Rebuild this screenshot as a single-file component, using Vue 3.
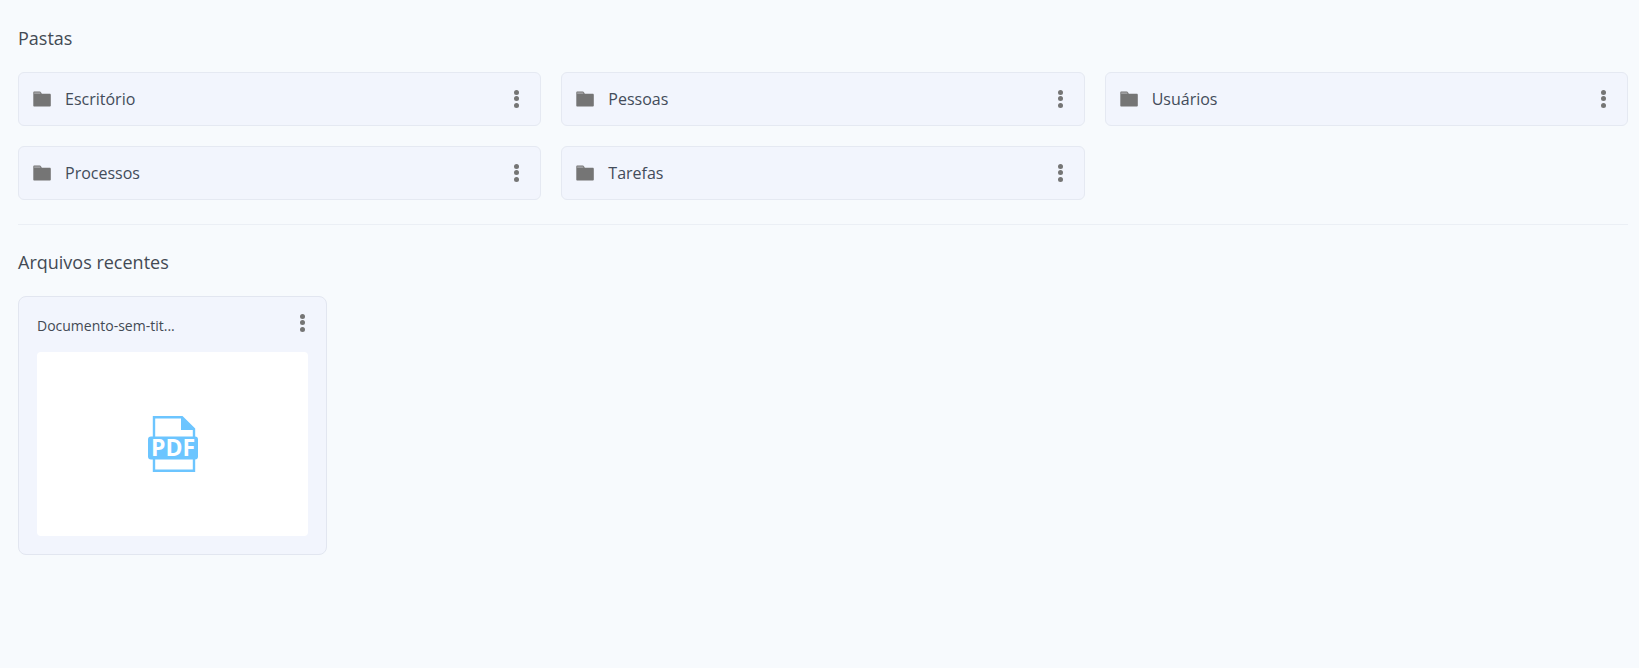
<script setup>
const folders = ['Escritório', 'Pessoas', 'Usuários', 'Processos', 'Tarefas']
</script>

<template>
  <main class="page">
    <h2 class="title">Pastas</h2>
    <div class="folders">
      <div v-for="f in folders" :key="f" class="folder">
        <svg class="folder-icon" width="18" height="16" viewBox="0 0 18 16">
          <path d="M1.4 0.5H6.6C7.3 0.5 7.8 0.9 8.1 1.5L8.8 2.8H16.7C17.4 2.8 17.8 3.3 17.8 4V14.5C17.8 15.2 17.3 15.6 16.7 15.6H1.4C0.7 15.6 0.3 15.1 0.3 14.5V1.6C0.3 1 0.7 0.5 1.4 0.5Z" fill="#757575"/>
          <path d="M1.2 2.1H7.4" stroke="#e9ebf0" stroke-width="0.6" fill="none"/>
        </svg>
        <span class="folder-name">{{ f }}</span>
        <div class="dots"><i></i><i></i><i></i></div>
      </div>
    </div>
    <hr class="divider" />
    <h2 class="title recent">Arquivos recentes</h2>
    <div class="file">
      <div class="file-head">
        <span class="file-name">Documento-sem-tit...</span>
        <div class="dots"><i></i><i></i><i></i></div>
      </div>
      <div class="preview">
        <svg width="50" height="56" viewBox="0 0 50 56">
          <path d="M6 21V1.2H34L46 13V21M46 43V54.8H6V43" fill="none" stroke="#6cc5ff" stroke-width="2.4"/>
          <path d="M33 1.2L46 14H33Z" fill="#6cc5ff"/>
          <rect x="0" y="20.5" width="50" height="23" rx="3" fill="#6cc5ff"/>
          <text x="25" y="40" text-anchor="middle" class="pdf">PDF</text>
        </svg>
      </div>
    </div>
  </main>
</template>

<style scoped>
.page {
  box-sizing: border-box;
  min-height: 668px;
  padding: 25px 11px 0 18px;
  background: #f7fafd;
  font-family: "Open Sans", sans-serif;
}
.title {
  margin: 0;
  font-size: 18px;
  font-weight: 400;
  line-height: 26px;
  color: #434a54;
}
.folders {
  display: grid;
  grid-template-columns: repeat(3, 1fr);
  gap: 20px;
  margin-top: 21px;
}
.folder {
  box-sizing: border-box;
  height: 54px;
  display: flex;
  align-items: center;
  padding: 0 21px 0 14px;
  background: #f2f5fd;
  border: 1px solid #e5e9f2;
  border-radius: 6px;
}
.folder-icon {
  flex: none;
}
.folder-name {
  margin-left: 14px;
  font-size: 16px;
  color: #434c5a;
}
.dots {
  margin-left: auto;
  display: flex;
  flex-direction: column;
  gap: 1.5px;
}
.folder .dots {
  margin-top: -1px;
}
.dots i {
  display: block;
  width: 5px;
  height: 5px;
  border-radius: 50%;
  background: #757575;
}
.divider {
  margin: 24px 0 0;
  border: 0;
  border-top: 1px solid #ebeff5;
}
.recent {
  margin-top: 24px;
}
.file {
  box-sizing: border-box;
  width: 309px;
  height: 259px;
  margin-top: 21px;
  padding: 14px 18px 18px;
  background: #f2f5fd;
  border: 1px solid #e2e6f0;
  border-radius: 8px;
  display: flex;
  flex-direction: column;
}
.file-head {
  display: flex;
  align-items: flex-start;
  height: 41px;
  padding-right: 3px;
}
.file-name {
  margin-top: 5px;
  font-size: 14px;
  line-height: 19px;
  color: #434a54;
}
.file-head .dots {
  margin-top: 2.5px;
}
.preview {
  flex: 1;
  box-sizing: border-box;
  padding-bottom: 1px;
  background: #fff;
  border-radius: 4px;
  display: flex;
  align-items: center;
  justify-content: center;
}
.pdf {
  font-family: "Open Sans", sans-serif;
  font-weight: 700;
  font-size: 23px;
  fill: #fff;
}
</style>

<style>
body { margin: 0; background: #f7fafd; }
</style>
